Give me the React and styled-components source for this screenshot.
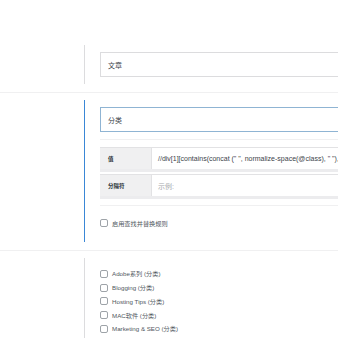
import React from 'react';
import styled, { createGlobalStyle } from 'styled-components';

const GlobalStyle = createGlobalStyle`
  html, body {
    margin: 0;
    padding: 0;
    background: #fff;
    overflow: hidden;
  }
  body {
    font-family: "Liberation Sans", "Noto Sans CJK SC", sans-serif;
    color: #50575e;
  }
`;

const Page = styled.div`
  width: 338px;
  height: 338px;
  overflow: hidden;
  padding-top: 45px;
  box-sizing: border-box;
`;

const Section = styled.div`
  padding: ${p => p.$top ?? 7}px 0 8px 84px;
  border-bottom: 1px solid #f0f0f1;
  width: 520px;
`;

const Field = styled.div`
  border-left: ${p => (p.$active ? '1.5px solid #3a87d6' : '1px solid #dcdcde')};
  padding: 7px 0 ${p => p.$bottom ?? 7}px 15px;
`;

const TextBox = styled.div`
  height: 25px;
  box-sizing: border-box;
  border: 1px solid ${p => (p.$focus ? '#8fb4d3' : '#dcdcde')};
  padding: 0 7px;
  display: flex;
  align-items: center;
  font-size: 7px;
  color: #3c434a;
  background: #fff;
`;

const Rule = styled.div`
  height: 1px;
  background: #f0f0f1;
  margin: ${p => p.$m || '7px 0'};
`;

const Table = styled.div`
  display: flex;
  flex-direction: column;
  gap: 2px;
`;

const Row = styled.div`
  display: flex;
  height: 25px;
  box-sizing: border-box;
  border-top: 1px solid #e2e2e4;
  border-bottom: 3px solid #ececee;
`;

const Label = styled.div`
  width: 52px;
  flex-shrink: 0;
  background: #f0f0f1;
  border-right: 1px solid #e2e2e4;
  display: flex;
  align-items: center;
  padding-left: 8px;
  box-sizing: border-box;
  font-size: 5.5px;
  font-weight: bold;
  color: #2c3338;
`;

const Value = styled.div`
  flex: 1;
  display: flex;
  align-items: center;
  padding-left: 6px;
  font-size: 7px;
  white-space: nowrap;
  color: ${p => (p.$placeholder ? '#a7aaad' : '#3c434a')};
`;

const CheckRow = styled.label`
  display: flex;
  align-items: center;
  gap: 4px;
  height: ${p => p.$h || 14}px;
  font-size: 6.2px;
  color: #50575e;
  white-space: nowrap;
`;

const Box = styled.span`
  width: 8px;
  height: 8px;
  box-sizing: border-box;
  border: 1px solid #9ea3a8;
  border-radius: 2px;
  background: #fff;
  flex-shrink: 0;
`;

const List = styled.div`
  padding-top: 2px;
`;

const categories = [
  'Adobe系列 (分类)',
  'Blogging (分类)',
  'Hosting Tips (分类)',
  'MAC软件 (分类)',
  'Marketing & SEO (分类)',
  'Software (分类)',
];

export default function App() {
  return (
    <Page>
      <GlobalStyle />
      <Section $top={0}>
        <Field>
          <TextBox>文章</TextBox>
        </Field>
      </Section>
      <Section>
        <Field $active $bottom={11}>
          <TextBox $focus>分类</TextBox>
          <Rule />
          <Table>
            <Row>
              <Label>值</Label>
              <Value>//div[1][contains(concat (" ", normalize-space(@class), " "), " category ")]//a</Value>
            </Row>
            <Row>
              <Label>分隔符</Label>
              <Value $placeholder>示例:</Value>
            </Row>
          </Table>
          <Rule $m="6px 0 9px" />
          <CheckRow $h={16}>
            <Box />
            启用查找并替换规则
          </CheckRow>
        </Field>
      </Section>
      <Section>
        <Field>
          <List>
            {categories.map(c => (
              <CheckRow key={c} $h={13.75}>
                <Box />
                {c}
              </CheckRow>
            ))}
          </List>
        </Field>
      </Section>
    </Page>
  );
}
